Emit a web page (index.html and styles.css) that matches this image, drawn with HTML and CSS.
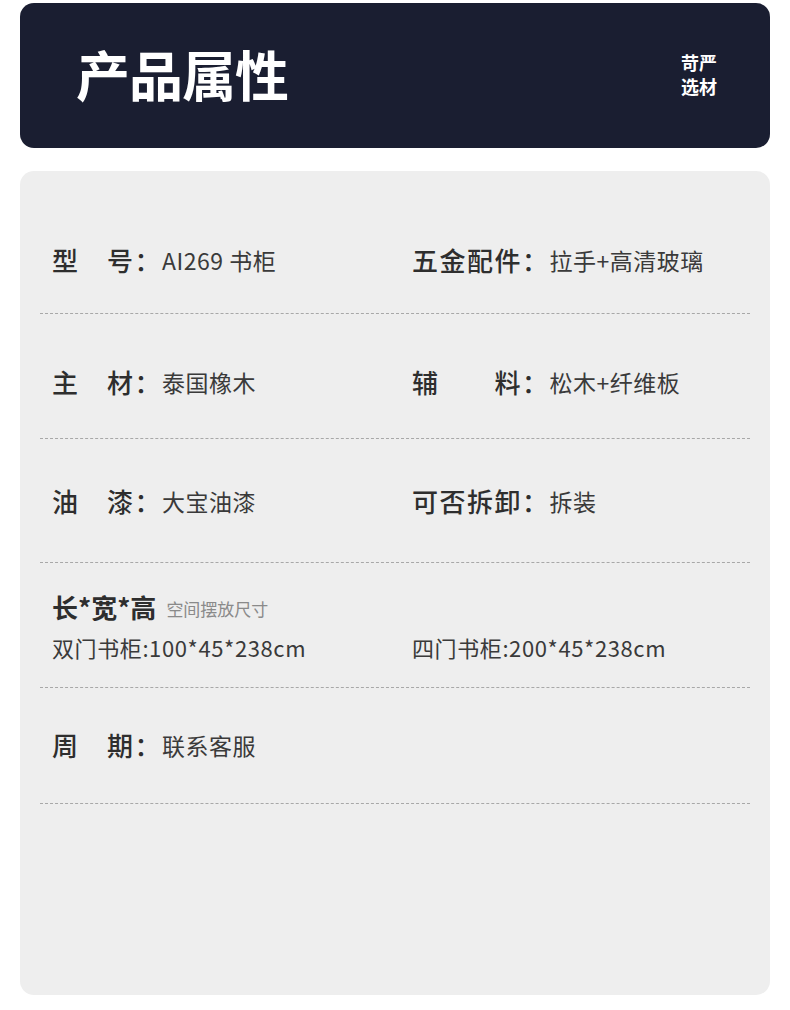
FILE: index.html
```html
<!DOCTYPE html>
<html lang="zh-CN">
<head>
<meta charset="utf-8">
<title>产品属性</title>
<link rel="stylesheet" href="styles.css">
</head>
<body>
<div class="page">
  <header class="banner">
    <h1 class="banner-title">产品属性</h1>
    <div class="banner-tag">苛严<br>选材</div>
  </header>
  <section class="card">
    <div class="row row-1">
      <div class="cell"><span class="label">型　号：</span><span class="value">AI269 书柜</span></div>
      <div class="cell"><span class="label">五金配件：</span><span class="value">拉手+高清玻璃</span></div>
    </div>
    <div class="row row-2">
      <div class="cell"><span class="label">主　材：</span><span class="value">泰国橡木</span></div>
      <div class="cell"><span class="label">辅　　料：</span><span class="value">松木+纤维板</span></div>
    </div>
    <div class="row row-3">
      <div class="cell"><span class="label">油　漆：</span><span class="value">大宝油漆</span></div>
      <div class="cell"><span class="label">可否拆卸：</span><span class="value">拆装</span></div>
    </div>
    <div class="row row-4">
      <div class="size-head"><span class="label label-strong">长*宽*高</span><span class="hint">空间摆放尺寸</span></div>
      <div class="size-values">
        <div class="cell"><span class="value value-size">双门书柜:100*45*238cm</span></div>
        <div class="cell"><span class="value value-size">四门书柜:200*45*238cm</span></div>
      </div>
    </div>
    <div class="row row-5">
      <div class="cell"><span class="label">周　期：</span><span class="value">联系客服</span></div>
    </div>
  </section>
</div>
</body>
</html>
```

FILE: styles.css
```css
html, body {
  margin: 0;
  padding: 0;
  background: #ffffff;
}
body {
  font-family: "Noto Sans CJK SC", "Noto Sans", sans-serif;
  color: #333333;
}
.page {
  width: 790px;
  padding: 3px 20px 0;
  box-sizing: border-box;
}
.banner {
  height: 145px;
  background: #1a1e31;
  border-radius: 14px;
  display: flex;
  align-items: center;
  justify-content: space-between;
  padding: 0 52px 0 56px;
  box-sizing: border-box;
}
.banner-title {
  margin: 0;
  color: #ffffff;
  font-size: 54px;
  font-weight: 700;
  line-height: 1;
  letter-spacing: -1px;
  padding-bottom: 4px;
}
.banner-tag {
  color: #ffffff;
  font-size: 18px;
  font-weight: 700;
  line-height: 24px;
  padding-bottom: 4px;
  padding-right: 1px;
}
.card {
  margin-top: 23px;
  height: 824px;
  background: #eeeeee;
  border-radius: 14px;
  padding: 0 20px;
  box-sizing: border-box;
}
.row {
  border-bottom: 1px dashed #a8a8a8;
  padding-left: 12px;
}
.row-1, .row-2, .row-3, .row-5 {
  display: grid;
  grid-template-columns: 360px 1fr;
}
.row-1 { padding-top: 71px; padding-bottom: 35px; }
.row-2 { padding-top: 50px; padding-bottom: 38px; }
.row-3 { padding-top: 44px; padding-bottom: 43px; }
.row-4 { padding-top: 26px; padding-bottom: 22px; }
.row-5 { padding-top: 39px; padding-bottom: 40px; }
.cell {
  display: flex;
  align-items: center;
  height: 36px;
  white-space: nowrap;
}
.label {
  font-size: 26px;
  font-weight: 500;
  letter-spacing: 1.5px;
  color: #2e2e2e;
  line-height: 36px;
}
.value {
  font-size: 23px;
  color: #3a3a3a;
  line-height: 36px;
  letter-spacing: 0.5px;
}
.value-size {
  font-size: 22px;
  letter-spacing: 0.6px;
}
.size-head {
  display: flex;
  align-items: center;
  height: 36px;
  gap: 10px;
}
.size-head .label-strong {
  letter-spacing: 0;
  font-weight: 700;
}
.hint {
  font-size: 17px;
  color: #8a8a8a;
  line-height: 36px;
  padding-top: 3px;
}
.size-values {
  display: grid;
  grid-template-columns: 360px 1fr;
  margin-top: 4px;
}
```
